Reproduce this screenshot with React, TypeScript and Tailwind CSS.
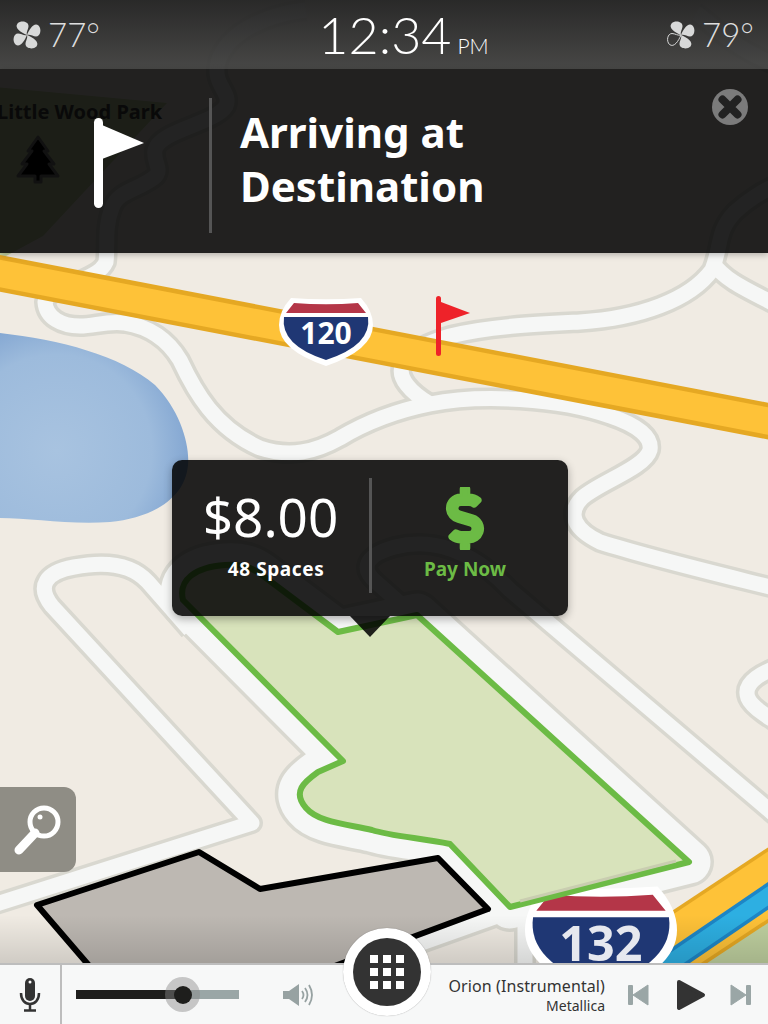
import { FaDollarSign } from "react-icons/fa";

const roads = [
  "M306 10 C270 14 228 30 218 62 C212 85 232 92 226 106 C215 124 160 130 155 150 C153 162 162 168 156 176 C140 190 118 190 112 208 C104 228 108 248 106 262 C98 282 50 285 45 302 C46 318 62 326 80 326 C95 326 105 321 125 323 C150 327 168 340 180 360 C195 392 215 428 260 448 C290 458 315 452 340 438 C370 420 400 410 430 404 C480 394 560 398 610 416 C640 426 652 438 650 450 C645 468 600 482 582 498 C566 514 575 530 600 542 C650 558 710 572 790 592",
  "M430 404 C410 392 398 378 402 366 C410 350 430 342 450 336 C490 326 540 324 580 322 C640 318 690 300 712 270 C722 245 716 232 735 212 C748 200 760 192 790 178",
  "M712 262 C726 282 748 290 790 312",
  "M696 13 C712 22 730 50 790 70",
  "M-10 906 L252 823 L52 606 C36 586 46 572 74 567 C100 562 130 562 148 582 L190 630",
  "M790 828 L510 590 C470 548 430 538 395 547 C362 556 362 570 376 582 L402 605 L340 622",
  "M790 662 C762 672 742 682 748 698 C752 708 772 720 790 730",
  "M520 908 L402 950",
  "M525 915 L525 975",
];

const parkingLot =
  "M183 600 C178 580 195 567 225 565 C240 564 250 566 262 575 L338 632 L417 615 L689 862 L510 907 L450 844 C420 838 390 836 372 830 C345 824 318 822 306 808 C292 792 304 782 318 772 L343 761 Z";

function Shield({ x, y, scale, label, textColor }: { x: number; y: number; scale: number; label: string; textColor: string }) {
  return (
    <g transform={`translate(${x} ${y}) scale(${scale})`}>
      <path d="M12 1 Q47 3.5 82 1 Q94 14 94 28 Q94 53 47 69 Q0 53 0 28 Q0 14 12 1 Z" fill="#ffffff" />
      <path d="M15 6 Q47 8.5 79 6 L87 16 L7 16 Z" fill="#b43648" />
      <path d="M5 20 L89 20 Q93 48 47 63 Q1 48 5 20 Z" fill="#1f3774" />
      <text x="47" y="47" textAnchor="middle" fontSize="30" fontWeight="700" fill={textColor} fontFamily="'Noto Sans', sans-serif">
        {label}
      </text>
    </g>
  );
}

function MapLayer() {
  return (
    <svg className="absolute inset-0" width="768" height="1024" viewBox="0 0 768 1024">
      <defs>
        <radialGradient id="lake" cx="0.3" cy="0.62" r="0.78">
          <stop offset="0" stopColor="#a8c3e0" />
          <stop offset="0.65" stopColor="#9dbbdc" />
          <stop offset="1" stopColor="#7a9fce" />
        </radialGradient>
        <linearGradient id="fade" x1="0" y1="0" x2="0" y2="1">
          <stop offset="0" stopColor="#000" stopOpacity="0" />
          <stop offset="1" stopColor="#000" stopOpacity="0.14" />
        </linearGradient>
      </defs>
      <rect width="768" height="1024" fill="#f0ebe3" />
      <path d="M-5 87 L167 103 L43 236 L-5 262 Z" fill="#c3d2a0" />
      <path d="M0 333 C60 340 120 355 155 385 C180 410 190 445 188 465 C185 500 150 518 110 522 C70 525 30 518 0 518 Z" fill="url(#lake)" />
      <path d="M768 905 L768 970 L680 970 Z" fill="#bfd09f" />

      {roads.map((d, i) => (
        <path key={i} d={d} fill="none" stroke="#d9d8d0" strokeWidth="22" strokeLinejoin="round" />
      ))}
      <path d={parkingLot} fill="#d9d8d0" stroke="#d9d8d0" strokeWidth="50" strokeLinejoin="round" />
      {roads.map((d, i) => (
        <path key={i} d={d} fill="none" stroke="#f6f7f6" strokeWidth="15" strokeLinejoin="round" />
      ))}
      <path d={parkingLot} fill="#f6f7f6" stroke="#f6f7f6" strokeWidth="43" strokeLinejoin="round" />

      <path d="M-10 271.5 L778 423" stroke="#e5a823" strokeWidth="36" fill="none" />
      <path d="M-10 271.5 L778 423" stroke="#fec238" strokeWidth="27" fill="none" />
      <path d="M620 983 L800 864" stroke="#e5a823" strokeWidth="63" fill="none" />
      <path d="M620 983 L800 864" stroke="#fec238" strokeWidth="56" fill="none" />
      <path d="M630 990 L800 874" stroke="#1d86c6" strokeWidth="23" fill="none" />
      <path d="M630 990 L800 874" stroke="#2dafe2" strokeWidth="16" fill="none" />

      <path d="M37 905 L199 852 L260 889 L438 858 L488 909 L270 990 L110 990 Z" fill="#bdb8b2" stroke="#000" strokeWidth="6" strokeLinejoin="round" />
      <rect y="915" width="768" height="50" fill="url(#fade)" />

      <Shield x={525} y={885} scale={1.617} label="132" textColor="#e6e8ef" />
      <path d={parkingLot} fill="#d8e3bb" stroke="#6cbb45" strokeWidth="6" strokeLinejoin="round" />
      <path d="M520 901 L676 861" stroke="#c9cdb0" strokeWidth="3" fill="none" />

      <Shield x={279} y={297} scale={1} label="120" textColor="#ffffff" />
      <rect x="436" y="296" width="5" height="60" rx="2.5" fill="#ee2229" />
      <path d="M441 302 L470 313 L441 323 Z" fill="#ee2229" />

      <text x="-3" y="119" fontSize="20" fontWeight="700" fill="#444" fontFamily="'Noto Sans', sans-serif">
        Little Wood Park
      </text>
      <path
        d="M38 137 L48 151 L44 151 L54 164 L49 164 L58 176 L41 176 L41 182 L35 182 L35 176 L18 176 L27 164 L22 164 L32 151 L28 151 Z"
        fill="#000"
        stroke="#777"
        strokeWidth="3"
        strokeLinejoin="round"
      />
    </svg>
  );
}

function Fan({ outlined = false }: { outlined?: boolean }) {
  const petal = "M0 0 C-1 -3 1.5 -6 1.5 -9 C1.5 -13.5 -6 -15 -9.5 -11.5 C-13 -7 -6 -2.5 0 0 Z";
  return (
    <svg width="30" height="30" viewBox="-15 -15 30 30">
      {[0, 90, 180, 270].map((r) => (
        <path
          key={r}
          d={petal}
          transform={`rotate(${r})`}
          fill={outlined && r === 270 ? "none" : "#d8d9d9"}
          stroke={outlined && r === 270 ? "#d8d9d9" : "none"}
          strokeWidth="1"
        />
      ))}
    </svg>
  );
}

function TopBar() {
  return (
    <div className="relative flex h-[69px] items-center justify-between bg-linear-to-b from-[#1f1f1f]/95 to-[#3f3f3e]/95 pl-[12px] pr-[14px] font-['Lato',sans-serif]">
      <div className="flex items-center gap-[6px] text-[33px] font-light leading-none text-[#dedede]">
        <Fan />
        <span>77°</span>
      </div>
      <div className="ml-[41px] mt-[-2px] flex items-baseline font-light text-white">
        <span className="text-[52px] leading-none">12:34</span>
        <span className="ml-[6px] text-[21px] leading-none">PM</span>
      </div>
      <div className="flex items-center gap-[6px] text-[33px] font-light leading-none text-[#dedede]">
        <Fan outlined />
        <span>79°</span>
      </div>
    </div>
  );
}

function Banner() {
  return (
    <div className="relative flex h-[184px] items-center bg-black/[0.86] pt-[9px] shadow-[0_2px_6px_rgba(0,0,0,0.25)]">
      <div className="mt-[-5px] flex w-[209px] justify-center pl-[28px]">
        <svg width="52" height="92" viewBox="0 0 52 92">
          <rect x="1" y="1" width="9" height="90" rx="4.5" fill="#fff" />
          <path d="M9 8 L51 26 L9 42 Z" fill="#fff" />
        </svg>
      </div>
      <div className="h-[135px] w-[3px] bg-[#555]" />
      <h1 className="ml-[28px] mt-[-13px] text-[42px] font-bold leading-[54px] text-white">
        Arriving at
        <br />
        Destination
      </h1>
      <button className="absolute right-[20px] top-[20px]">
        <svg width="36" height="36" viewBox="0 0 36 36" className="block">
          <circle cx="18" cy="18" r="18" fill="#7b7b7b" />
          <path d="M10.5 10.5 L25.5 25.5 M25.5 10.5 L10.5 25.5" stroke="#222" strokeWidth="8" strokeLinecap="round" />
        </svg>
      </button>
    </div>
  );
}

function ParkingPopover() {
  return (
    <div className="absolute left-[172px] top-[460px] flex h-[156px] w-[396px] items-start rounded-[10px] bg-black/[0.86] shadow-[0_3px_8px_rgba(0,0,0,0.3)]">
      <div className="flex w-[197px] flex-col items-center pt-[27px]">
        <span className="text-[53px] leading-[60px] text-white">$8.00</span>
        <span className="ml-[11px] mt-[10px] text-[19px] font-bold leading-6 tracking-[0.6px] text-white">48 Spaces</span>
      </div>
      <div className="mt-[18px] h-[115px] w-[3px] bg-[#555]" />
      <div className="flex flex-1 flex-col items-center pr-[10px] pt-[27px]">
        <FaDollarSign className="h-[63px] w-[40px] stroke-current stroke-[22] text-[#6cbb45]" />
        <span className="mt-[7px] text-[19px] font-bold leading-6 text-[#6cbb45]">Pay Now</span>
      </div>
      <div className="absolute left-[178px] top-full h-0 w-0 border-x-[20px] border-t-[21px] border-x-transparent border-t-black/[0.86]" />
    </div>
  );
}

function SearchButton() {
  return (
    <button className="absolute left-0 top-[787px] flex h-[85px] w-[76px] items-center justify-center rounded-r-[12px] bg-[#8f8d85]">
      <svg width="52" height="56" viewBox="0 0 52 56">
        <circle cx="32" cy="20" r="14" fill="none" stroke="#fff" strokeWidth="5" />
        <circle cx="28" cy="15" r="2.5" fill="#fff" />
        <path d="M23 31 L7 48" stroke="#fff" strokeWidth="9" strokeLinecap="round" />
      </svg>
    </button>
  );
}

function BottomBar() {
  return (
    <div className="absolute inset-x-0 bottom-0 flex h-[61px] items-center border-t-[2px] border-[#bdbdbd] bg-[#f7f8f8]">
      <div className="flex h-full w-[62px] items-center justify-center border-r-[2px] border-[#bdbdbd]">
        <svg width="22" height="34" viewBox="0 0 22 34">
          <rect x="6" y="0" width="10" height="23" rx="5" fill="#333" />
          <circle cx="11" cy="4" r="1.5" fill="#fff" />
          <path d="M2 15 C2 22 6 26 11 26 C16 26 20 22 20 15" fill="none" stroke="#333" strokeWidth="2.5" />
          <path d="M11 26 L11 32 M5 32.5 L17 32.5" stroke="#333" strokeWidth="2.5" />
        </svg>
      </div>
      <div className="relative ml-[14px] flex h-[9px] w-[163px] bg-[#9aa6a6]">
        <div className="h-full w-[107px] bg-[#1e1e1c]" />
        <div className="absolute left-[89px] top-[-13px] flex size-[35px] items-center justify-center rounded-full bg-[#8a8a8a]/45">
          <div className="size-[18px] rounded-full bg-[#1e1e1c]" />
        </div>
      </div>
      <svg width="32" height="26" viewBox="0 0 32 26" className="ml-[43px]">
        <path d="M1 9 L7 9 L17 2 L17 24 L7 17 L1 17 Z" fill="#97a2a2" />
        <path d="M20 9 Q23 13 20 17 M23 6 Q28 13 23 20 M27 3 Q33 13 27 23" fill="none" stroke="#97a2a2" strokeWidth="1.8" />
      </svg>
      <div className="absolute left-[343px] top-[-37px] flex size-[88px] items-center justify-center rounded-full bg-white shadow-[0_0_1px_rgba(0,0,0,0.4)]">
        <div className="flex size-[68px] items-center justify-center rounded-full bg-[#333]">
          <div className="grid grid-cols-3 gap-[5px]">
            {Array.from({ length: 9 }).map((_, i) => (
              <div key={i} className="size-[8px] bg-white" />
            ))}
          </div>
        </div>
      </div>
      <div className="ml-auto flex flex-col items-end text-[#333]">
        <span className="text-[16px] leading-[22px] tracking-[0.1px]">Orion (Instrumental)</span>
        <span className="text-[14px] leading-[18px]">Metallica</span>
      </div>
      <div className="ml-[22px] mr-[16px] flex items-center">
        <svg width="22" height="22" viewBox="0 0 22 22">
          <rect x="1" y="1" width="5" height="20" rx="1" fill="#9aa6a6" />
          <path d="M21 1 L21 21 L6 11 Z" fill="#9aa6a6" stroke="#9aa6a6" strokeLinejoin="round" />
        </svg>
        <svg width="30" height="32" viewBox="0 0 30 32" className="ml-[27px]">
          <path d="M3 3 L27 16 L3 29 Z" fill="#333" stroke="#333" strokeWidth="4" strokeLinejoin="round" />
        </svg>
        <svg width="22" height="22" viewBox="0 0 22 22" className="ml-[24px]">
          <rect x="16" y="1" width="5" height="20" rx="1" fill="#9aa6a6" />
          <path d="M1 1 L1 21 L16 11 Z" fill="#9aa6a6" stroke="#9aa6a6" strokeLinejoin="round" />
        </svg>
      </div>
    </div>
  );
}

export default function App() {
  return (
    <div className="relative h-[1024px] w-[768px] overflow-hidden font-['Noto_Sans',sans-serif]">
      <MapLayer />
      <div className="relative flex flex-col">
        <TopBar />
        <Banner />
      </div>
      <ParkingPopover />
      <SearchButton />
      <BottomBar />
    </div>
  );
}
